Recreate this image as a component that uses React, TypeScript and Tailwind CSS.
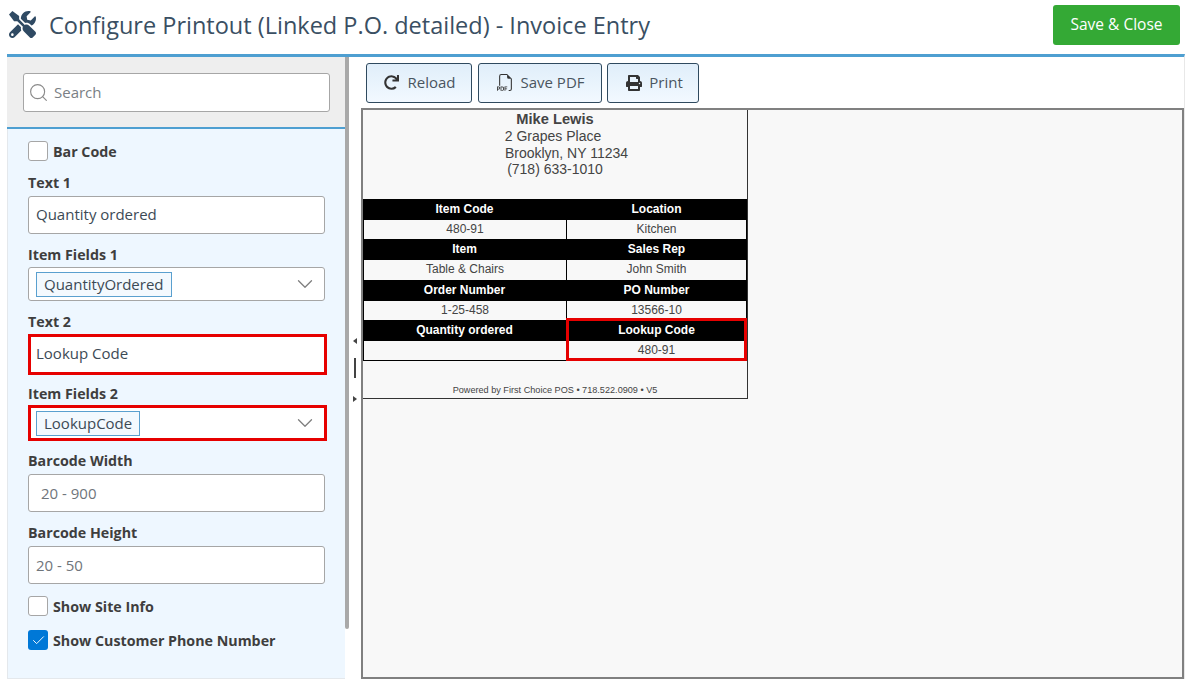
import React from 'react';
import { ChevronDown, Search, Check } from 'lucide-react';
import { FaTools, FaRedo, FaPrint } from 'react-icons/fa';
import { BsFiletypePdf } from 'react-icons/bs';

const inputClass = 'flex items-center w-[297px] bg-white border border-[#a6a6a6] rounded-[3px] text-[15px] text-[#3c4a55] pl-[7px]';

const FieldLabel = ({ children, className = '' }: { children: React.ReactNode; className?: string }) => (
  <div className={`text-[14.25px] font-bold text-[#3e3e3e] leading-[20px] pt-[2px] ${className}`}>{children}</div>
);

const Checkbox = ({ checked = false, label }: { checked?: boolean; label: string }) => (
  <div className="flex items-center h-[20px]">
    {checked ? (
      <div className="w-[20px] h-[20px] rounded-[3px] bg-[#0078d7] flex items-center justify-center">
        <Check className="w-[15px] h-[15px] text-white" strokeWidth={1.5} />
      </div>
    ) : (
      <div className="w-[20px] h-[20px] rounded-[3px] bg-white border border-[#a6a6a6]" />
    )}
    <span className="ml-[5px] text-[14.25px] font-bold text-[#3e3e3e] pt-[1px]">{label}</span>
  </div>
);

const Tag = ({ text }: { text: string }) => (
  <span className="h-[25px] flex items-center px-[7px] border border-[#5aa0cf] bg-[#f3f9fe] text-[15px] text-[#3c4a55]">{text}</span>
);

const ToolButton = ({ icon, label, className }: { icon: React.ReactNode; label: string; className: string }) => (
  <button className={`h-[40px] flex items-center justify-center rounded-[3px] border border-[#2f4a5f] bg-gradient-to-b from-[#e0eefa] to-[#f2f9ff] text-[15px] text-[#4a5560] pb-[1px] ${className}`}>
    {icon}
    <span>{label}</span>
  </button>
);

const rows = [
  { head: ['Item Code', 'Location'], values: ['480-91', 'Kitchen'], valueHeight: 'h-[19px]' },
  { head: ['Item', 'Sales Rep'], values: ['Table & Chairs', 'John Smith'], valueHeight: 'h-[20px]' },
  { head: ['Order Number', 'PO Number'], values: ['1-25-458', '13566-10'], valueHeight: 'h-[19px]' },
];

const HeadCell = ({ text, className = '' }: { text: string; className?: string }) => (
  <div className={`h-[21px] bg-black text-white font-bold text-center leading-[20px] ${className}`}>{text}</div>
);

const ValueCell = ({ text, className = '' }: { text: string; className?: string }) => (
  <div className={`text-center leading-[18px] text-[#444] ${className}`}>{text}</div>
);

export default function App() {
  return (
    <div className="w-[1189px] h-[685px] bg-white overflow-hidden font-['Open_Sans',sans-serif]">
      {/* Header */}
      <div className="h-[54px] flex items-center pl-[9px] pr-[9px]">
        <FaTools className="w-[27px] h-[27px] text-[#2f4a63] mb-[5px]" />
        <h1 className="ml-[13px] text-[23.5px] font-medium text-[#3a4f63] mb-[3px]">
          Configure Printout (Linked P.O. detailed) - Invoice Entry
        </h1>
        <button className="ml-auto w-[127px] h-[40px] rounded-[3px] bg-[#34a935] text-white text-[15.5px] mb-[4px]">
          Save &amp; Close
        </button>
      </div>

      {/* Body */}
      <div className="ml-[7px] w-[1178px] h-[625px] border-t-[3px] border-[#4e9fd1] border-r border-r-[#e8e8e8] flex">
        {/* Left panel */}
        <div className="w-[338px] h-[622px] border-l border-b border-[#e4e8ec] bg-[#eef7ff] flex flex-col shrink-0">
          <div className="h-[72px] bg-[#eeeeee] border-b-2 border-[#4e9fd1] pl-[15px] pt-[16px] shrink-0 -ml-px">
            <div className="w-[307px] h-[39px] bg-white border border-[#a6a6a6] rounded-[3px] flex items-center pl-[4px] ml-px">
              <Search className="w-[21px] h-[21px] text-[#8a8a8a]" strokeWidth={1.3} />
              <span className="ml-[5px] text-[15px] text-[#7a7f85] pb-[1px]">Search</span>
            </div>
          </div>
          <div className="pl-[20px] pt-[12px]">
            <Checkbox label="Bar Code" />
            <FieldLabel className="mt-[10px]">Text 1</FieldLabel>
            <div className={`${inputClass} h-[38px] mt-[3px] pb-[1px]`}>Quantity ordered</div>
            <FieldLabel className="mt-[9px]">Item Fields 1</FieldLabel>
            <div className={`${inputClass} h-[34px] mt-[2px] justify-between pr-[6px]`}>
              <Tag text="QuantityOrdered" />
              <ChevronDown className="w-[26px] h-[26px] text-[#7f7f7f]" strokeWidth={1.2} />
            </div>
            <FieldLabel className="mt-[9px]">Text 2</FieldLabel>
            <div className="flex items-center w-[299px] h-[41px] mt-[2px] bg-white border-[3px] border-[#e60000] text-[15px] text-[#3c4a55] pl-[5px] pb-[3px]">
              Lookup Code
            </div>
            <FieldLabel className="mt-[7px]">Item Fields 2</FieldLabel>
            <div className="flex items-center justify-between w-[299px] h-[36px] mt-[1px] bg-white border-[3px] border-[#e60000] pl-[5px] pr-[6px]">
              <Tag text="LookupCode" />
              <ChevronDown className="w-[26px] h-[26px] text-[#7f7f7f]" strokeWidth={1.2} />
            </div>
            <FieldLabel className="mt-[8px]">Barcode Width</FieldLabel>
            <div className={`${inputClass} h-[38px] mt-[3px] pl-[12px] text-[#6f757b]`}>20 - 900</div>
            <FieldLabel className="mt-[9px]">Barcode Height</FieldLabel>
            <div className={`${inputClass} h-[38px] mt-[3px] text-[#6f757b]`}>20 - 50</div>
            <div className="mt-[12px]">
              <Checkbox label="Show Site Info" />
            </div>
            <div className="mt-[14px]">
              <Checkbox checked label="Show Customer Phone Number" />
            </div>
          </div>
        </div>

        {/* Scrollbar */}
        <div className="w-[4px] shrink-0">
          <div className="h-[572px] bg-[#a9a9a9] rounded-b-[2px]" />
        </div>

        {/* Splitter */}
        <div className="w-[12px] shrink-0 flex flex-col items-center h-[622px] pt-[281px]">
          <div className="flex flex-col items-center -ml-[1px]">
            <div className="w-0 h-0 border-y-[3px] border-y-transparent border-r-[4px] border-r-[#444]" />
            <div className="w-[2px] h-[20px] bg-[#444] mt-[14px]" />
            <div className="w-0 h-0 mt-[18px] border-y-[3px] border-y-transparent border-l-[4px] border-l-[#444]" />
          </div>
        </div>

        {/* Right */}
        <div className="flex-1 flex flex-col min-w-0">
          <div className="h-[51px] flex items-start gap-[6px] pt-[6px] pl-[5px]">
            <ToolButton
              className="w-[106px] pl-[2px]"
              icon={<FaRedo className="w-[15px] h-[15px] text-[#333] mr-[8px]" />}
              label="Reload"
            />
            <ToolButton
              className="w-[124px] pl-[2px]"
              icon={<BsFiletypePdf className="w-[17px] h-[17px] text-[#333] mr-[6px]" />}
              label="Save PDF"
            />
            <ToolButton
              className="w-[92px] -ml-px pl-[3px]"
              icon={<FaPrint className="w-[16px] h-[16px] text-[#333] mr-[7px]" />}
              label="Print"
            />
          </div>

          {/* Preview */}
          <div className="w-[823px] h-[571px] border-2 border-[#808080] bg-[#f8f8f8] font-['Liberation_Sans',sans-serif]">
            <div className="w-[385px] h-[289px] border-r border-b border-[#333] flex flex-col">
              <div className="h-[89px] text-[#444] text-center text-[14px]">
                <div className="font-bold text-[14.67px] leading-[18px]">Mike Lewis</div>
                <div className="leading-[17px] pr-[4px]">2 Grapes Place</div>
                <div className="leading-[17px] pl-[23px]">Brooklyn, NY 11234</div>
                <div className="leading-[15px]">(718) 633-1010</div>
              </div>
              <div className="text-[12px]">
                {rows.map((r) => (
                  <div key={r.head[0]}>
                    <div className="flex">
                      <HeadCell text={r.head[0]} className="w-[203px]" />
                      <HeadCell text={r.head[1]} className="w-[181px]" />
                    </div>
                    <div className="flex">
                      <ValueCell text={r.values[0]} className={`w-[204px] border-l border-r border-black ${r.valueHeight}`} />
                      <ValueCell text={r.values[1]} className={`w-[180px] border-r border-black ${r.valueHeight}`} />
                    </div>
                  </div>
                ))}
                <div className="flex">
                  <div className="w-[203px]">
                    <HeadCell text="Quantity ordered" />
                    <div className="h-[20px] border-l border-b border-black" />
                  </div>
                  <div className="relative w-[181px] h-[41px]">
                    <HeadCell text="Lookup Code" />
                    <ValueCell text="480-91" className="h-[20px]" />
                    <div className="absolute left-0 right-0 -top-[2px] bottom-0 border-[3px] border-[#e60000]" />
                  </div>
                </div>
              </div>
              <div className="mt-auto text-center text-[9.15px] text-[#444] leading-[12px] pb-[2px]">
                Powered by First Choice POS • 718.522.0909 • V5
              </div>
            </div>
          </div>
        </div>
      </div>
    </div>
  );
}
